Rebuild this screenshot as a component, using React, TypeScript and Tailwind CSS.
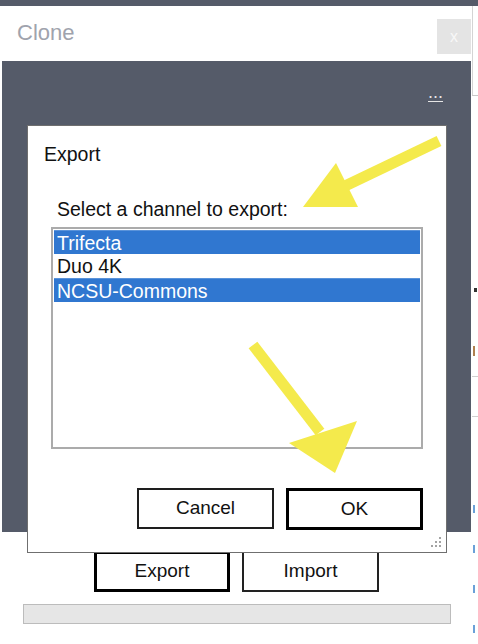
import React from "react";

const font = { fontFamily: '"Liberation Sans", Arial, sans-serif' };

function Grip() {
  const dots: [number, number][] = [
    [8, 0],
    [4, 4],
    [8, 4],
    [0, 8],
    [4, 8],
    [8, 8],
  ];
  return (
    <svg width="11" height="11" viewBox="0 0 11 11" className="absolute right-[4px] bottom-[4px]">
      {dots.map(([x, y], i) => (
        <rect key={i} x={x} y={y} width="2" height="2" fill="#a3a3a3" />
      ))}
    </svg>
  );
}

function ExportDialog() {
  return (
    <div className="absolute left-[27px] top-[125px] w-[420px] h-[428px] bg-white border border-[#6f6f6f] flex flex-col text-[#111]">
      <div className="pl-[16px] pt-[17px] text-[19.5px] leading-[22px]">Export</div>
      <div className="pl-[29px] mt-[33px] text-[19.5px] leading-[22px]">Select a channel to export:</div>
      <div className="ml-[23px] mt-[7px] w-[372px] h-[222px] border-2 border-[#ababab] p-px flex flex-col">
        <div className="h-[24px] leading-[24px] pl-[3px] text-[19.5px] bg-[#3077d0] text-white border-t border-[#5a93da]">Trifecta</div>
        <div className="h-[24px] leading-[24px] pl-[3px] text-[19.5px]">Duo 4K</div>
        <div className="h-[24px] leading-[24px] pl-[3px] text-[19.5px] bg-[#3077d0] text-white border-t border-[#5a93da]">NCSU-Commons</div>
      </div>
      <div className="ml-[109px] mt-[39px] flex gap-[12px]">
        <div className="w-[137px] h-[41px] border-2 border-[#1e1e1e] flex items-center justify-center text-[19px]">Cancel</div>
        <div className="w-[137px] h-[42px] border-[3px] border-black flex items-center justify-center text-[19px]">OK</div>
      </div>
      <Grip />
    </div>
  );
}

function Arrows() {
  const y = "#f4ea4c";
  return (
    <svg width="478" height="644" viewBox="0 0 478 644" className="absolute left-0 top-0 pointer-events-none">
      <line x1="439" y1="141" x2="345" y2="186" stroke={y} strokeWidth="11" />
      <polygon points="303,207 336,163 358,207" fill={y} />
      <line x1="253" y1="345" x2="320" y2="432" stroke={y} strokeWidth="11" />
      <polygon points="289,443 357,421 335,473" fill={y} />
    </svg>
  );
}

function RightSliver() {
  return (
    <div className="w-[6px] h-full flex flex-col">
      <div className="h-[89px] border-l border-[#d4d4d4]" />
      <div className="h-px bg-[#c8c8c8]" />
      <div className="h-[192px]" />
      <div className="ml-[2px] w-[3px] h-[4px] bg-[#333]" />
      <div className="h-[54px]" />
      <div className="ml-[1px] w-[2px] h-[10px] bg-[#b08050]" />
      <div className="h-[20px]" />
      <div className="h-px bg-[#d0d0d0]" />
      <div className="h-[39px]" />
      <div className="h-px bg-[#d0d0d0]" />
      <div className="h-[88px]" />
      <div className="ml-[1px] w-[2px] h-[8px] bg-[#6aa0d8]" />
      <div className="h-[32px]" />
      <div className="ml-[1px] w-[2px] h-[8px] bg-[#6aa0d8]" />
      <div className="h-[32px]" />
      <div className="ml-[1px] w-[2px] h-[8px] bg-[#6aa0d8]" />
      <div className="h-[32px]" />
      <div className="ml-[1px] w-[2px] h-[8px] bg-[#6aa0d8]" />
    </div>
  );
}

export default function App() {
  return (
    <div className="relative w-[478px] h-[644px] overflow-hidden bg-white" style={font}>
      <div className="h-[6px] bg-[#555b69]" />
      <div className="flex h-[638px]">
        <div className="w-[472px] flex flex-col bg-white">
          <div className="h-[55px] flex items-start">
            <div className="pl-[17px] pt-[14px] text-[22px] leading-[26px] text-[#a0a3ad]">Clone</div>
            <div className="ml-auto mr-px mt-[13px] w-[34px] h-[35px] bg-[#e4e4e4] flex items-center justify-center text-[16px] text-[#f8f8f8]">x</div>
          </div>
          <div className="ml-[2px] w-[469px] h-[471px] bg-[#555b69] flex justify-end items-start pr-[28px] pt-[22px]">
            <span className="text-[18px] leading-[18px] text-[#e6e6e6] border-b border-[#e6e6e6]">...</span>
          </div>
          <div className="mt-[19px] pl-[94px] flex gap-[12px]">
            <div className="w-[136px] h-[41px] border-[3px] border-black flex items-center justify-center text-[19px] text-[#111]">Export</div>
            <div className="w-[137px] h-[41px] border-2 border-[#222] flex items-center justify-center text-[19px] text-[#111]">Import</div>
          </div>
          <div className="mt-[12px] ml-[23px] w-[428px] h-[20px] bg-[#e6e6e6] border border-[#bcbcbc]" />
        </div>
        <RightSliver />
      </div>
      <ExportDialog />
      <Arrows />
    </div>
  );
}
